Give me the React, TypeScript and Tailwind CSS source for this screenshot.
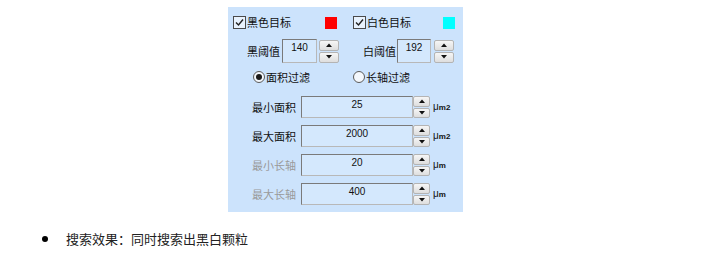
import React from 'react';

const cjk = { fontFamily: '"Noto Sans CJK SC", "Noto Sans", sans-serif' };
const num = { fontFamily: '"Liberation Sans", Arial, sans-serif' };

const CheckBox: React.FC = () => (
    <span className="w-[13px] h-[13px] border border-[#4a4a4a] bg-[#e8f2fd] flex items-center justify-center shrink-0">
        <svg width="9" height="9" viewBox="0 0 9 9">
            <path d="M1 4.5 L3.5 7 L8 1.5" fill="none" stroke="#222" strokeWidth="1.4" />
        </svg>
    </span>
);

const Radio: React.FC<{ checked?: boolean }> = ({ checked }) => (
    <span className="w-[12px] h-[12px] rounded-full border border-[#5a5a5a] bg-[#f4f8fc] flex items-center justify-center shrink-0">
        {checked && <span className="w-[6px] h-[6px] rounded-full bg-[#1a1a1a]" />}
    </span>
);

const Spinner: React.FC<{ w: string; h: string }> = ({ w, h }) => (
    <div className={`flex flex-col gap-px shrink-0 ${w} ${h}`}>
        {[0, 1].map(i => (
            <div
                key={i}
                className="flex-1 rounded-[2px] border border-[#b4b4b4] bg-gradient-to-b from-[#f6f6f6] to-[#dedede] flex items-center justify-center"
            >
                <svg width="6" height="4" viewBox="0 0 6 4">
                    {i === 0 ? <path d="M0 4 L3 0.5 L6 4 Z" fill="#111" /> : <path d="M0 0 L6 0 L3 3.5 Z" fill="#111" />}
                </svg>
            </div>
        ))}
    </div>
);

const Field: React.FC<{ value: string; className: string }> = ({ value, className }) => (
    <div
        className={`shrink-0 border border-t-[#7a7a7a] border-l-[#7a7a7a] border-r-[#b8b8b8] border-b-[#b8b8b8] bg-[#d4e8fd] text-center text-[10px] text-[#111] leading-none pt-[3px] ${className}`}
        style={num}
    >
        {value}
    </div>
);

const Unit: React.FC<{ sup?: string }> = ({ sup }) => (
    <span className="ml-[3px] text-[10px] text-[#111] flex items-end leading-none" style={num}>
        <span>μ</span>
        <span className="text-[8px] font-bold">m{sup}</span>
    </span>
);

const rows = [
    { label: '最小面积', value: '25', unit: '2', dim: false },
    { label: '最大面积', value: '2000', unit: '2', dim: false },
    { label: '最小长轴', value: '20', unit: '', dim: true },
    { label: '最大长轴', value: '400', unit: '', dim: true },
];

export default function App() {
    return (
        <div className="w-[707px] h-[261px] bg-white overflow-hidden" style={cjk}>
            {/* Settings panel */}
            <div className="ml-[228px] mt-[7px] w-[235px] h-[205px] bg-[#cce3fc] text-[11px] leading-none text-[#111] whitespace-nowrap pt-[9px]">
                <div className="flex items-center pl-[5px] h-[13px]">
                    <div className="w-[104px] flex items-center justify-between">
                        <span className="flex items-center gap-px">
                            <CheckBox />
                            <span>黑色目标</span>
                        </span>
                        <span className="w-[12px] h-[12px] bg-[#ff0000]" />
                    </div>
                    <div className="ml-[16px] w-[102px] flex items-center justify-between">
                        <span className="flex items-center gap-px">
                            <CheckBox />
                            <span>白色目标</span>
                        </span>
                        <span className="w-[12px] h-[12px] bg-[#00ffff]" />
                    </div>
                </div>

                <div className="flex items-center pl-[19px] mt-[10px] h-[24px]">
                    <span className="w-[35px] shrink-0">黑阈值</span>
                    <Field value="140" className="w-[35px] h-[24px]" />
                    <div className="ml-[2px]"><Spinner w="w-[20px]" h="h-[23px]" /></div>
                    <span className="ml-[24px] w-[34px] shrink-0">白阈值</span>
                    <Field value="192" className="w-[34px] h-[24px]" />
                    <div className="ml-[3px]"><Spinner w="w-[20px]" h="h-[23px]" /></div>
                </div>

                <div className="flex items-center pl-[25px] mt-[8px] h-[12px]">
                    <span className="w-[100px] flex items-center gap-px">
                        <Radio checked />
                        <span>面积过滤</span>
                    </span>
                    <span className="flex items-center gap-px">
                        <Radio />
                        <span>长轴过滤</span>
                    </span>
                </div>

                <div className="flex flex-col gap-[7px] mt-[13px] pl-[24px]">
                    {rows.map(r => (
                        <div key={r.label} className="flex items-center h-[22px]">
                            <span className={`w-[49px] shrink-0 ${r.dim ? 'text-[#9a9a9a]' : 'text-[#111]'}`}>{r.label}</span>
                            <Field value={r.value} className="w-[112px] h-[22px]" />
                            <Spinner w="w-[17px]" h="h-[22px]" />
                            <Unit sup={r.unit} />
                        </div>
                    ))}
                </div>
            </div>

            {/* Note */}
            <div className="flex items-center mt-[19px] pl-[42px] h-[16px]">
                <span className="w-[6px] h-[6px] rounded-full bg-black shrink-0" />
                <span className="ml-[18px] text-[13px] text-[#222] whitespace-nowrap">搜索效果：同时搜索出黑白颗粒</span>
            </div>
        </div>
    );
}
